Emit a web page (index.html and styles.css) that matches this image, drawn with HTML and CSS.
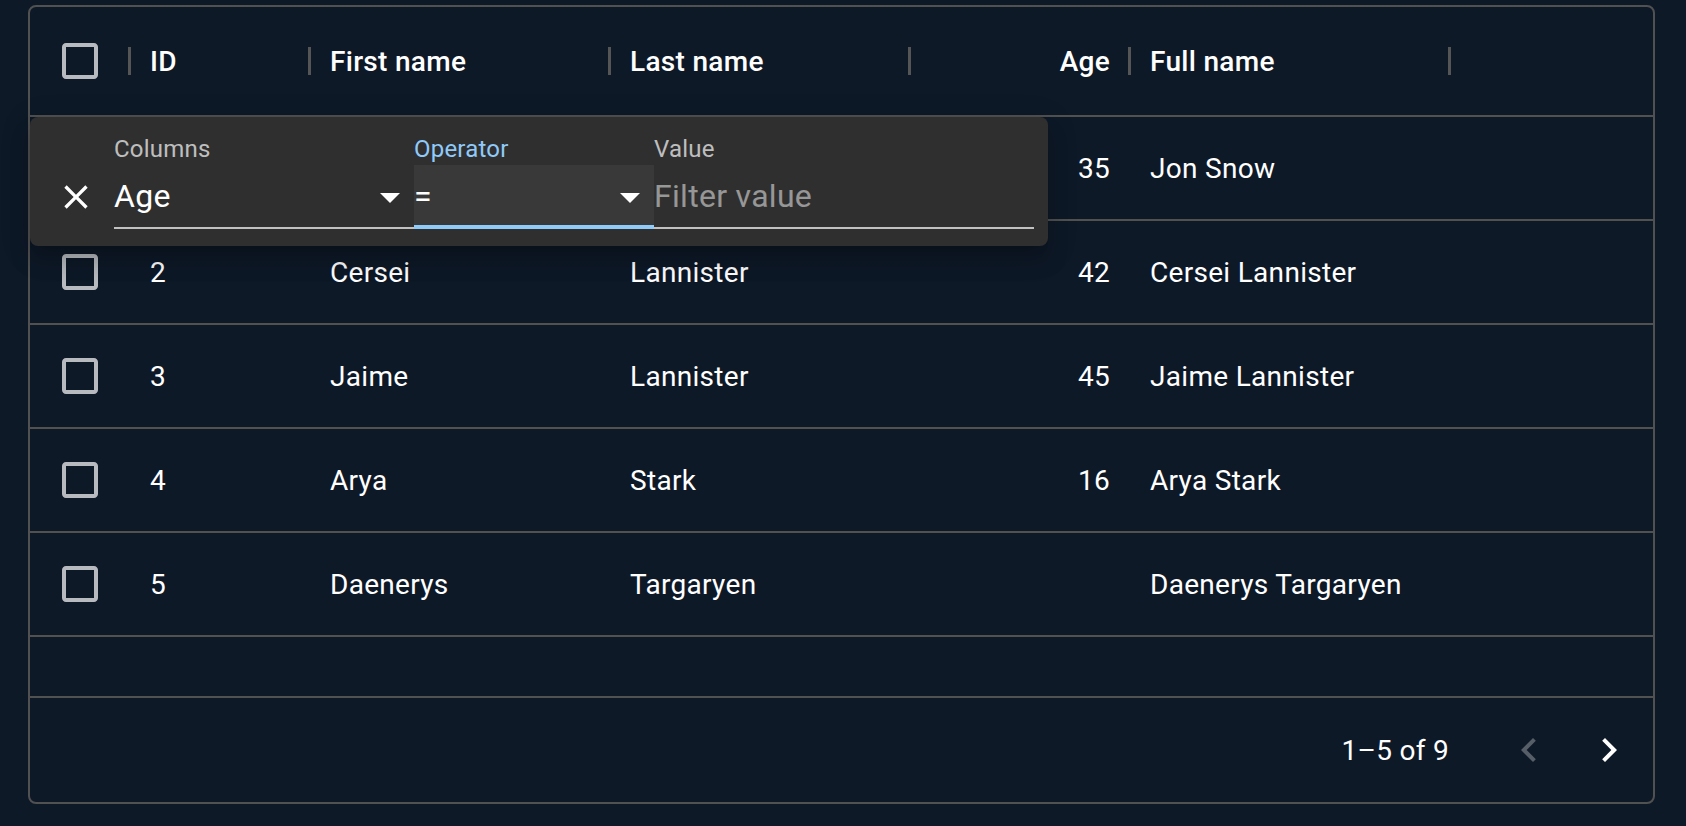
FILE: index.html
```html
<!DOCTYPE html>
<html lang="en">
<head>
<meta charset="utf-8">
<title>Data grid with filter panel</title>
<link rel="stylesheet" href="styles.css">
</head>
<body>
<div class="grid">
  <div class="header">
    <div class="cell c-check"><svg class="cb" viewBox="0 0 24 24"><path d="M19 5v14H5V5h14m0-2H5c-1.11 0-2 .9-2 2v14c0 1.1.89 2 2 2h14c1.1 0 2-.9 2-2V5c0-1.1-.9-2-2-2z"/></svg><span class="sep"></span></div>
    <div class="cell c-id">ID<span class="sep"></span></div>
    <div class="cell c-first">First name<span class="sep"></span></div>
    <div class="cell c-last">Last name<span class="sep"></span></div>
    <div class="cell c-age">Age<span class="sep"></span></div>
    <div class="cell c-full">Full name<span class="sep"></span></div>
  </div>
  <div class="row">
    <div class="cell c-check"><svg class="cb" viewBox="0 0 24 24"><path d="M19 5v14H5V5h14m0-2H5c-1.11 0-2 .9-2 2v14c0 1.1.89 2 2 2h14c1.1 0 2-.9 2-2V5c0-1.1-.9-2-2-2z"/></svg></div>
    <div class="cell c-id">1</div>
    <div class="cell c-first">Jon</div>
    <div class="cell c-last">Snow</div>
    <div class="cell c-age">35</div>
    <div class="cell c-full">Jon Snow</div>
  </div>
  <div class="row">
    <div class="cell c-check"><svg class="cb" viewBox="0 0 24 24"><path d="M19 5v14H5V5h14m0-2H5c-1.11 0-2 .9-2 2v14c0 1.1.89 2 2 2h14c1.1 0 2-.9 2-2V5c0-1.1-.9-2-2-2z"/></svg></div>
    <div class="cell c-id">2</div>
    <div class="cell c-first">Cersei</div>
    <div class="cell c-last">Lannister</div>
    <div class="cell c-age">42</div>
    <div class="cell c-full">Cersei Lannister</div>
  </div>
  <div class="row">
    <div class="cell c-check"><svg class="cb" viewBox="0 0 24 24"><path d="M19 5v14H5V5h14m0-2H5c-1.11 0-2 .9-2 2v14c0 1.1.89 2 2 2h14c1.1 0 2-.9 2-2V5c0-1.1-.9-2-2-2z"/></svg></div>
    <div class="cell c-id">3</div>
    <div class="cell c-first">Jaime</div>
    <div class="cell c-last">Lannister</div>
    <div class="cell c-age">45</div>
    <div class="cell c-full">Jaime Lannister</div>
  </div>
  <div class="row">
    <div class="cell c-check"><svg class="cb" viewBox="0 0 24 24"><path d="M19 5v14H5V5h14m0-2H5c-1.11 0-2 .9-2 2v14c0 1.1.89 2 2 2h14c1.1 0 2-.9 2-2V5c0-1.1-.9-2-2-2z"/></svg></div>
    <div class="cell c-id">4</div>
    <div class="cell c-first">Arya</div>
    <div class="cell c-last">Stark</div>
    <div class="cell c-age">16</div>
    <div class="cell c-full">Arya Stark</div>
  </div>
  <div class="row">
    <div class="cell c-check"><svg class="cb" viewBox="0 0 24 24"><path d="M19 5v14H5V5h14m0-2H5c-1.11 0-2 .9-2 2v14c0 1.1.89 2 2 2h14c1.1 0 2-.9 2-2V5c0-1.1-.9-2-2-2z"/></svg></div>
    <div class="cell c-id">5</div>
    <div class="cell c-first">Daenerys</div>
    <div class="cell c-last">Targaryen</div>
    <div class="cell c-age"></div>
    <div class="cell c-full">Daenerys Targaryen</div>
  </div>
  <div class="filler"></div>
  <div class="footer">
    <div class="displayed">1–5 of 9</div>
    <div class="actions">
      <div class="pbtn disabled"><svg viewBox="0 0 24 24"><path d="M15.41 16.59 10.83 12l4.58-4.59L14 6l-6 6 6 6 1.41-1.41z"/></svg></div>
      <div class="pbtn"><svg viewBox="0 0 24 24"><path d="M8.59 16.59 13.17 12 8.59 7.41 10 6l6 6-6 6-1.41-1.41z"/></svg></div>
    </div>
  </div>

  <div class="filter-panel">
    <div class="del"><svg viewBox="0 0 24 24"><path d="M19 6.41 17.59 5 12 10.59 6.41 5 5 6.41 10.59 12 5 17.59 6.41 19 12 13.41 17.59 19 19 17.59 13.41 12z"/></svg></div>
    <div class="field f-columns">
      <div class="label">Columns</div>
      <div class="input">Age<svg class="arrow" viewBox="0 0 24 24"><path d="M7 10l5 5 5-5z"/></svg></div>
    </div>
    <div class="field f-op">
      <div class="label focused">Operator</div>
      <div class="input focused">=<svg class="arrow" viewBox="0 0 24 24"><path d="M7 10l5 5 5-5z"/></svg></div>
    </div>
    <div class="field f-value">
      <div class="label">Value</div>
      <div class="input"><span class="placeholder">Filter value</span></div>
    </div>
  </div>
</div>
</body>
</html>
```

FILE: styles.css
```css
* { box-sizing: border-box; }
html, body { margin: 0; }
body {
  background: #0e1928;
  font-family: Roboto, "Noto Sans", sans-serif;
  color: #fff;
  padding: 5px 31px 0 28px;
}
.grid {
  position: relative;
  height: 799px;
  border: 2px solid #515151;
  border-radius: 8px;
  display: flex;
  flex-direction: column;
}
.header {
  height: 110px;
  flex-shrink: 0;
  display: flex;
  border-bottom: 2px solid #515151;
}
.row {
  height: 104px;
  flex-shrink: 0;
  display: flex;
  border-bottom: 2px solid #515151;
}
.cell {
  position: relative;
  display: flex;
  align-items: center;
  padding: 0 20px;
  font-size: 28px;
  letter-spacing: 0.3px;
  white-space: nowrap;
}
.header .cell { font-weight: 500; }
.c-check { width: 100px; justify-content: center; padding: 0; }
.c-id { width: 180px; }
.c-first { width: 300px; }
.c-last { width: 300px; }
.c-age { width: 220px; justify-content: flex-end; }
.c-full { width: 320px; }
.sep {
  position: absolute;
  right: -1px;
  top: 50%;
  width: 3px;
  height: 28px;
  margin-top: -14px;
  background: #555;
}
.cb { width: 48px; height: 48px; fill: rgba(255,255,255,0.7); }
.filler { flex: 1; }
.footer {
  height: 106px;
  flex-shrink: 0;
  border-top: 2px solid #515151;
  display: flex;
  align-items: center;
  justify-content: flex-end;
  padding-right: 4px;
}
.displayed { font-size: 28px; letter-spacing: 0.3px; }
.actions { display: flex; margin-left: 40px; }
.pbtn { width: 80px; height: 80px; display: flex; align-items: center; justify-content: center; }
.pbtn svg { width: 48px; height: 48px; fill: #fff; }
.pbtn.disabled svg { fill: rgba(255,255,255,0.3); }

.filter-panel {
  position: absolute;
  left: 0;
  top: 110px;
  background: #2f2f2f;
  border-radius: 8px;
  box-shadow: 0 10px 10px -10px rgba(0,0,0,0.2), 0 16px 20px 2px rgba(0,0,0,0.14), 0 6px 28px 4px rgba(0,0,0,0.12);
  padding: 16px 14px 17px 16px;
  display: flex;
  align-items: flex-end;
}
.del {
  width: 60px;
  height: 60px;
  margin: 0 8px 2px 0;
  display: flex;
  align-items: center;
  justify-content: center;
}
.del svg { width: 40px; height: 40px; fill: #fff; }
.field { display: flex; flex-direction: column; }
.f-columns { width: 300px; }
.f-op { width: 240px; }
.f-value { width: 380px; }
.label {
  height: 32px;
  font-size: 24px;
  line-height: 32px;
  letter-spacing: 0.2px;
  color: rgba(255,255,255,0.7);
}
.label.focused { color: #90caf9; }
.input {
  position: relative;
  height: 64px;
  padding: 8px 0;
  font-size: 32px;
  line-height: 46px;
  letter-spacing: 0.3px;
  border-bottom: 2px solid rgba(255,255,255,0.7);
  white-space: nowrap;
}
.input.focused {
  background: rgba(255,255,255,0.05);
  border-bottom: 4px solid #90caf9;
  padding-bottom: 6px;
}
.placeholder { color: rgba(255,255,255,0.5); }
.arrow {
  position: absolute;
  right: 0;
  top: 8px;
  width: 48px;
  height: 48px;
  fill: #fff;
}
```
